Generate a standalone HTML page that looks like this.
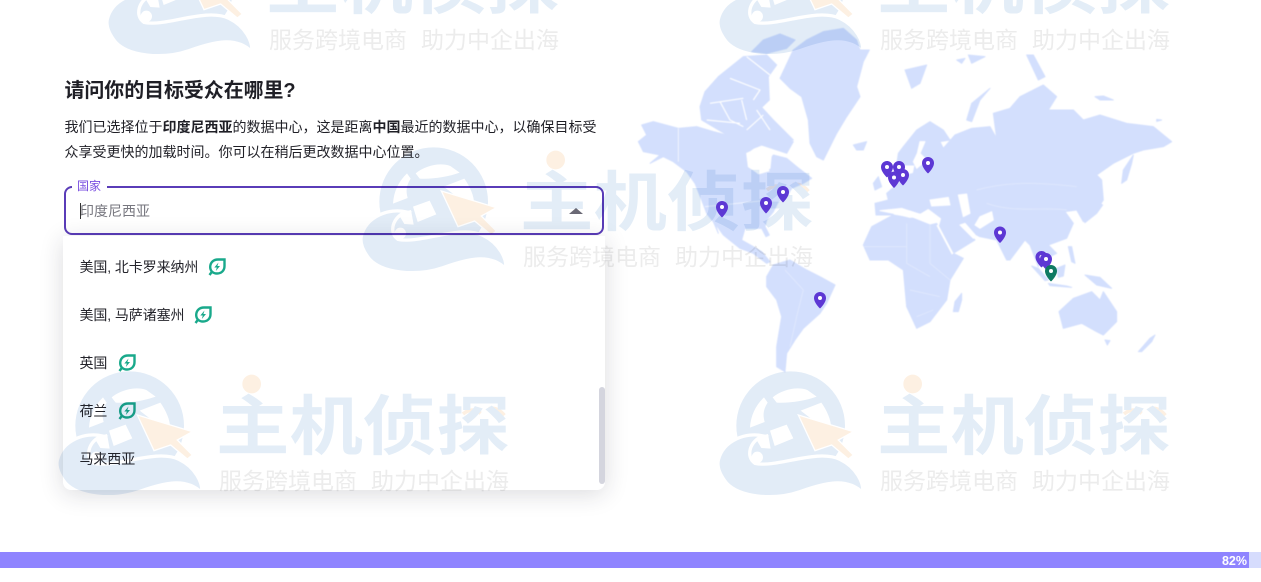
<!DOCTYPE html>
<html lang="zh-CN"><head><meta charset="utf-8"><title>数据中心</title>
<style>
*{box-sizing:border-box;margin:0;padding:0}
html,body{width:1261px;height:582px;overflow:hidden;background:#fff}
body{position:relative;font-family:"Liberation Sans","Noto Sans CJK SC",sans-serif;color:#1d1d24}
.abs{position:absolute;white-space:nowrap}
h1{position:absolute;left:64.500px;top:77px;font-size:20px;line-height:28px;font-weight:700;color:#1f1f26;white-space:nowrap;letter-spacing:-.1px}
.p{position:absolute;left:64.500px;top:115px;font-size:14px;line-height:25px;color:#1f1f26;white-space:nowrap}
.input{position:absolute;left:64px;top:186px;width:540px;height:49px;border:2px solid #5a3cb8;border-radius:8px;background:#fff}
.lab{position:absolute;left:72px;top:179px;padding:0 6px 0 5px;background:#fff;font-size:12px;line-height:14px;color:#7a4fe0}
.val{position:absolute;left:80px;top:201px;font-size:14px;line-height:20px;color:#77777f}
.caret{position:absolute;left:80px;top:203px;width:1px;height:16px;background:#333}
.tri{position:absolute;left:569px;top:208px;width:0;height:0;border-left:7px solid transparent;border-right:7px solid transparent;border-bottom:6px solid #6a6975}
.card{position:absolute;left:63px;top:236px;width:542px;height:254px;background:#fff;border-radius:0 0 8px 8px;box-shadow:0 4px 24px rgba(30,30,50,.16)}
.opt{position:absolute;left:79.500px;font-size:14px;line-height:20px;color:#24242b;white-space:nowrap;letter-spacing:-.1px}
.leaf{position:absolute;width:18px;height:18px}
.sb{position:absolute;left:599px;top:387px;width:6px;height:97px;border-radius:3px;background:#d4d5de}
.bar{position:absolute;left:0;top:552px;width:1249px;height:16px;background:#8f84ff}
.bar2{position:absolute;left:1249px;top:552px;width:12px;height:16px;background:#d6dcfd}
.pct{position:absolute;right:14px;top:552.500px;font:700 12.500px/16px "Liberation Sans",sans-serif;color:#fff}
#map{position:absolute;left:0;top:0;filter:blur(.45px)}
#wmwrap{position:absolute;left:0;top:0;width:1261px;height:582px;mix-blend-mode:multiply;pointer-events:none;overflow:hidden}
.wm{position:absolute;left:0;top:0;width:1261px;height:582px}
.wm svg{position:absolute;left:700px;top:360px}
.t1{position:absolute;left:877px;top:379px;font-size:72px;line-height:94px;font-weight:700;color:#e3edf7;white-space:nowrap;font-family:"Noto Sans CJK SC",sans-serif;transform:scale(1.02,.9);transform-origin:0 0}
.t2{position:absolute;left:880px;top:463px;font-size:23px;line-height:33px;color:#ececec;white-space:nowrap;font-family:"Noto Sans CJK SC",sans-serif}
.t2 i{display:inline-block;width:14px}
</style></head>
<body>
<svg width="0" height="0" style="position:absolute">
<symbol id="art" viewBox="0 0 1440 450">
<circle cx="272" cy="197" r="163" fill="#e2ecf7"/>
<path fill="#fff" d="M150 203C152 165 168 135 192 112L203 128C190 148 188 165 194 186ZM218 112C245 90 290 78 322 90L350 110C318 122 270 130 230 128ZM302 152L364 128C380 150 394 180 394 208L345 185ZM210 212L260 194L280 235L224 258ZM165 232L204 222L212 266L184 264Z"/>
<path fill="#fdf0e2" stroke="#fff" stroke-width="4" d="M295 165L460 215L415 240L460 285L445 297L395 255L345 272Z"/>
<path fill="#e2ecf7" stroke="#fff" stroke-width="10" d="M55 300C70 240 140 215 190 228C150 240 135 290 165 310C230 325 350 265 420 298C470 322 492 370 488 398C440 350 370 370 300 395C220 422 120 412 80 370C60 345 50 322 55 300Z"/>
<circle cx="172" cy="292" r="17" fill="#fff"/>
<circle cx="638" cy="72" r="28" fill="#fdf0e2"/>
<path d="M1272 162Q1298 140 1325 160M1350 146Q1375 140 1396 166" fill="none" stroke="#fdf0e2" stroke-width="11"/>
</symbol>
</svg>

<svg id="map" width="1261" height="582" viewBox="0 0 1261 582">
<g fill="#d3dffd" stroke="#d3dffd" stroke-width="3" stroke-linejoin="round">
<!-- z3 coordinates -->
<g transform="translate(630,20) scale(.33333)">
<path d="M25 365L50 345 35 315 70 305 145 325 200 320 250 335 290 345 330 335 370 340 430 345 490 365 470 400 425 385 395 375 370 385 350 400 355 440 385 465 420 455 415 425 430 405 470 415 500 440 545 475 520 490 485 505 470 530 445 545 430 575 410 600 405 620 418 645 408 650 395 625 345 625 335 660 370 680 395 695 420 725 410 730 370 700 330 685 280 645 255 610 265 640 250 605 230 580 215 540 195 490 170 455 130 425 100 410 60 430 90 405 40 395Z"/>
<path d="M450 175L490 90 530 60 580 35 640 25 680 60 690 90 718 90 700 125 680 200 690 230 650 290 620 340 580 420 560 410 540 370 535 300 515 230 480 205Z"/>
<path d="M365 95L400 60 450 42 495 60 470 85 410 100Z"/>
<path d="M225 215L265 170 340 110 410 105 440 135 415 170 418 240 395 262 430 300 490 360 440 370 300 350 215 300 210 260Z"/>
<path d="M670 375L710 365 700 390 680 390Z"/>
<path d="M730 490L745 470 755 500 735 510Z"/>
<path fill="#fff" stroke="#fff" d="M350 400L395 380 425 395 420 445 385 460 355 440Z"/>
<g fill="none" stroke="#fff" stroke-width="3.500">
<path d="M350 110L420 165M300 175L390 210 370 240M240 250L340 235M335 240L350 300M270 245L300 300 340 320M380 270L420 330M400 285L350 330M230 300L330 310"/>
<path d="M145 325V425" stroke-width="2"/>
<path d="M225 560L420 540" stroke-width="2"/>
</g>
</g>
<!-- z4 / world coordinates -->
<g transform="translate(630,190) scale(.33333)">
<path d="M410 260L430 225 480 210 530 240 570 260 615 285 590 340 570 370 520 415 495 450 470 490 465 545 440 530 440 470 455 380 440 330 410 290Z"/>
<path d="M700 165L725 110 790 75 850 85 900 105 920 100 970 190 1000 205 960 270 950 330 900 395 860 415 830 350 820 240 775 210 720 210Z"/>
<path d="M820 -130L860 -180 900 -205 940 -180 960 -150 930 -145 940 -125 975 -165 1025 -185 1080 -190 1100 -155 1090 -230 1140 -245 1170 -280 1240 -315 1280 -280 1255 -240 1330 -240 1360 -210 1410 -225 1490 -200 1570 -190 1625 -145 1600 -130 1540 -120 1510 -110 1450 -80 1400 -45 1415 -30 1420 30 1400 60 1360 95 1340 60 1305 65 1330 100 1310 145 1255 165 1280 190 1260 200 1250 215 1230 190 1225 230 1200 165 1185 150 1140 210 1130 210 1100 150 1050 140 1000 115 1035 150 970 190 925 120 935 85 895 55 870 70 840 60 830 70 790 60 790 75 738 75 735 40 775 30 770 10 810 -25 830 -45 850 -50 855 -75 800 -75 805 -110Z"/>
<path fill="#fff" stroke="#fff" d="M870 -145L885 -145 870 -110 890 -90 860 -65 850 -85 862 -110ZM900 30L955 22 960 45 905 48ZM985 15L1010 12 1020 70 1000 80ZM990 105L1005 100 1040 140 1030 145ZM1050 80L1085 65 1090 90 1050 115 1035 105ZM750 62L815 55 860 70 880 75 840 82 800 72Z"/>
<path d="M922 105L968 192" fill="none" stroke="#fff" stroke-width="6"/>
<path d="M1287 365L1330 325 1385 305 1410 330 1420 305 1460 365 1460 395 1420 435 1400 425 1355 400 1300 415Z"/>
<path d="M1425 450L1440 452 1432 465Z"/>
<path d="M1525 485L1560 445 1575 435 1565 455 1535 485Z"/>
<path d="M970 365L975 335 995 310 995 330 985 365Z"/>
<path d="M1205 228L1225 235 1255 270 1245 272Z"/>
<path d="M1280 235L1305 225 1300 258 1285 262Z"/>
<path d="M1365 255L1410 262 1445 295 1400 285Z"/>
<path d="M1255 280L1310 288 1325 292 1260 287Z"/>
<path d="M1315 170L1325 170 1335 220 1325 215Z"/>
<path d="M1360 90L1410 40 1418 45 1400 70 1365 98Z"/>
<path d="M1475 -20L1480 -60 1510 -105 1505 -80 1490 -30Z"/>
<g fill="none" stroke="#fff" stroke-width="2" opacity=".4">
<path d="M830 100V220L900 260M700 170L830 170M900 105V220L960 270M840 300L930 320M860 380L910 360"/>
<path d="M1040 0C1150 -30 1250 -20 1340 -10M1070 40C1150 70 1250 50 1310 60"/>
<path d="M465 240L520 300 500 380 480 470"/>
</g>
</g>
<!-- z5 coordinates -->
<g transform="translate(900,20) scale(.33333)">
<path d="M15 150L80 135 60 190 35 205Z"/>
<path d="M200 300L215 250 270 205 240 240 215 305Z"/>
<path d="M380 105L400 105 435 170 415 180Z"/>
<path d="M170 120L195 115 185 130ZM205 105L255 110 215 130Z"/>
<path d="M585 230L610 228 640 240 600 240Z"/>
<path d="M770 298L785 300 770 304Z"/>
</g>
</g>
</svg>

<h1>请问你的目标受众在哪里?</h1>
<div class="p">我们已选择位于<b>印度尼西亚</b>的数据中心&#xFF0C;这是距离<b>中国</b>最近的数据中心&#xFF0C;以确保目标受<br>众享受更快的加载时间。你可以在稍后更改数据中心位置。</div>

<div class="input"></div>
<div class="lab">国家</div>
<div class="val">印度尼西亚</div>
<div class="caret"></div>
<div class="tri"></div>

<div class="card"></div>
<div class="opt" style="top:257px">美国, 北卡罗来纳州</div>
<svg class="leaf" style="left:208px;top:258px" viewBox="0 0 18 18" fill="none" stroke="#19a98b" stroke-width="2.400"><path d="M16.500 1.500H10C5 1.500 2.200 5 2.200 9C2.200 13 5 15.500 9 15.500C13.500 15.500 16.500 12.500 16.500 8Z"/><path d="M4.500 13L1.500 17"/><path d="M10.500 4.500L6.300 9.500H8.800L7.800 13L12 8H9.400Z" fill="#19a98b" stroke="none"/></svg>
<div class="opt" style="top:305px">美国, 马萨诸塞州</div>
<svg class="leaf" style="left:194px;top:306px" viewBox="0 0 18 18" fill="none" stroke="#19a98b" stroke-width="2.400"><path d="M16.500 1.500H10C5 1.500 2.200 5 2.200 9C2.200 13 5 15.500 9 15.500C13.500 15.500 16.500 12.500 16.500 8Z"/><path d="M4.500 13L1.500 17"/><path d="M10.500 4.500L6.300 9.500H8.800L7.800 13L12 8H9.400Z" fill="#19a98b" stroke="none"/></svg>
<div class="opt" style="top:353px">英国</div>
<svg class="leaf" style="left:118px;top:354px" viewBox="0 0 18 18" fill="none" stroke="#19a98b" stroke-width="2.400"><path d="M16.500 1.500H10C5 1.500 2.200 5 2.200 9C2.200 13 5 15.500 9 15.500C13.500 15.500 16.500 12.500 16.500 8Z"/><path d="M4.500 13L1.500 17"/><path d="M10.500 4.500L6.300 9.500H8.800L7.800 13L12 8H9.400Z" fill="#19a98b" stroke="none"/></svg>
<div class="opt" style="top:401px">荷兰</div>
<svg class="leaf" style="left:118px;top:402px" viewBox="0 0 18 18" fill="none" stroke="#19a98b" stroke-width="2.400"><path d="M16.500 1.500H10C5 1.500 2.200 5 2.200 9C2.200 13 5 15.500 9 15.500C13.500 15.500 16.500 12.500 16.500 8Z"/><path d="M4.500 13L1.500 17"/><path d="M10.500 4.500L6.300 9.500H8.800L7.800 13L12 8H9.400Z" fill="#19a98b" stroke="none"/></svg>
<div class="opt" style="top:449px">马来西亚</div>
<div class="sb"></div>

<div class="bar"></div><div class="bar2"></div><div class="pct">82%</div>

<div id="wmwrap">
<div class="wm" style="transform:translate(0,0)"><svg width="480" height="150"><use href="#art"/></svg><div class="t1">主机侦探</div><div class="t2">服务跨境电商<i></i>助力中企出海</div></div>
<div class="wm" style="transform:translate(-661px,0)"><svg width="480" height="150"><use href="#art"/></svg><div class="t1">主机侦探</div><div class="t2">服务跨境电商<i></i>助力中企出海</div></div>
<div class="wm" style="transform:translate(-357px,-224px)"><svg width="480" height="150"><use href="#art"/></svg><div class="t1">主机侦探</div><div class="t2">服务跨境电商<i></i>助力中企出海</div></div>
<div class="wm" style="transform:translate(-611px,-441px)"><svg width="480" height="150"><use href="#art"/></svg><div class="t1">主机侦探</div><div class="t2">服务跨境电商<i></i>助力中企出海</div></div>
<div class="wm" style="transform:translate(0,-441px)"><svg width="480" height="150"><use href="#art"/></svg><div class="t1">主机侦探</div><div class="t2">服务跨境电商<i></i>助力中企出海</div></div>
</div>

<svg class="abs" style="left:0;top:0" width="1261" height="582" viewBox="0 0 1261 582">
<defs><g id="pin"><path d="M6 0C2.700 0 0 2.700 0 6C0 11 6 16.500 6 16.500S12 11 12 6C12 2.700 9.300 0 6 0Z"/><circle cx="6" cy="6" r="2" fill="#fff"/></g></defs>
<g fill="#5d38d4">
<use href="#pin" x="716" y="201"/>
<use href="#pin" x="760" y="197"/>
<use href="#pin" x="777" y="186"/>
<use href="#pin" x="814" y="292"/>
<use href="#pin" x="881" y="161"/>
<use href="#pin" x="893" y="161"/>
<use href="#pin" x="897" y="169"/>
<use href="#pin" x="888" y="171.500"/>
<use href="#pin" x="922" y="157"/>
<use href="#pin" x="994" y="226.500"/>
<use href="#pin" x="1035.500" y="251"/>
<use href="#pin" x="1040" y="253"/>
</g>
<use href="#pin" x="1045" y="265" fill="#0f7a63"/>
</svg>
</body></html>
